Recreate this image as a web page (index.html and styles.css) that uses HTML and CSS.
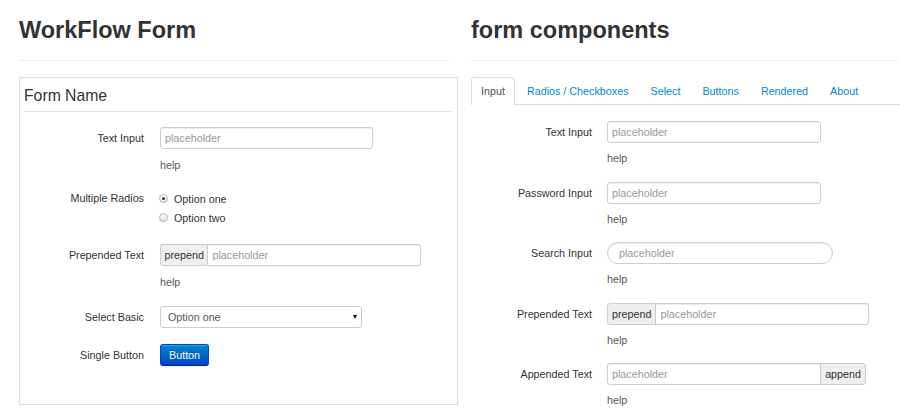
FILE: index.html
```html
<!DOCTYPE html>
<html>
<head>
<meta charset="utf-8">
<title>WorkFlow Form</title>
<link rel="stylesheet" href="styles.css">
</head>
<body>
<div class="page">
  <section class="col col-left">
    <h2 class="title">WorkFlow Form</h2>
    <hr class="rule">
    <div class="form-box">
      <div class="legend">Form Name</div>
      <div class="rows rows-left">
        <div class="row">
          <label class="lbl">Text Input</label>
          <div class="ctl">
            <input class="inp w-left-text" type="text" placeholder="placeholder">
            <div class="help">help</div>
          </div>
        </div>
        <div class="row row-radio">
          <label class="lbl lbl-radio">Multiple Radios</label>
          <div class="ctl">
            <div class="radio-line"><span class="radio-dot checked"></span>Option one</div>
            <div class="radio-line"><span class="radio-dot"></span>Option two</div>
          </div>
        </div>
        <div class="row">
          <label class="lbl">Prepended Text</label>
          <div class="ctl">
            <div class="group w-left-prepend">
              <span class="addon addon-pre">prepend</span>
              <input class="inp inp-after-addon" type="text" placeholder="placeholder">
            </div>
            <div class="help">help</div>
          </div>
        </div>
        <div class="row">
          <label class="lbl">Select Basic</label>
          <div class="ctl">
            <div class="select-wrap">
              <select class="sel">
                <option>Option one</option>
                <option>Option two</option>
              </select>
            </div>
          </div>
        </div>
        <div class="row">
          <label class="lbl">Single Button</label>
          <div class="ctl">
            <button class="btn">Button</button>
          </div>
        </div>
      </div>
    </div>
  </section>

  <section class="col col-right">
    <h2 class="title">form components</h2>
    <hr class="rule">
    <ul class="tabs">
      <li class="tab active">Input</li>
      <li class="tab">Radios / Checkboxes</li>
      <li class="tab">Select</li>
      <li class="tab">Buttons</li>
      <li class="tab">Rendered</li>
      <li class="tab">About</li>
    </ul>
    <div class="rows rows-right">
      <div class="row">
        <label class="lbl">Text Input</label>
        <div class="ctl">
          <input class="inp w-right-text" type="text" placeholder="placeholder">
          <div class="help">help</div>
        </div>
      </div>
      <div class="row">
        <label class="lbl">Password Input</label>
        <div class="ctl">
          <input class="inp w-right-text" type="password" placeholder="placeholder">
          <div class="help">help</div>
        </div>
      </div>
      <div class="row">
        <label class="lbl">Search Input</label>
        <div class="ctl">
          <input class="inp inp-search" type="text" placeholder="placeholder">
          <div class="help">help</div>
        </div>
      </div>
      <div class="row">
        <label class="lbl">Prepended Text</label>
        <div class="ctl">
          <div class="group w-right-prepend">
            <span class="addon addon-pre">prepend</span>
            <input class="inp inp-after-addon" type="text" placeholder="placeholder">
          </div>
          <div class="help">help</div>
        </div>
      </div>
      <div class="row">
        <label class="lbl">Appended Text</label>
        <div class="ctl">
          <div class="group w-right-append">
            <input class="inp inp-before-addon" type="text" placeholder="placeholder">
            <span class="addon addon-app">append</span>
          </div>
          <div class="help">help</div>
        </div>
      </div>
    </div>
  </section>
</div>
</body>
</html>
```
FILE: styles.css
```css
* { box-sizing: border-box; }
html, body { margin: 0; padding: 0; background: #fff; }
body {
  font-family: "Liberation Sans", Arial, sans-serif;
  font-size: 10.75px;
  color: #333;
  width: 900px;
  height: 417px;
  overflow: hidden;
}
.page { display: flex; gap: 13px; padding-left: 19px; }
.col { flex: none; }
.col-left { width: 439px; }
.col-right { width: 450px; }

.title {
  margin: 15px 0 0;
  font-size: 23.5px;
  line-height: 30px;
  font-weight: bold;
  color: #333;
}
.rule { margin: 15px 0 0; border: 0; border-top: 1px solid #eee; height: 0; }
.col-left .rule { width: 430px; }

.form-box {
  margin-top: 16px;
  border: 1px solid #ddd;
  padding: 0 4px 38px;
}
.legend {
  font-size: 15.75px;
  line-height: 26px;
  padding: 5px 0 2px;
  border-bottom: 1px solid #e5e5e5;
  color: #333;
}

.rows { display: flex; flex-direction: column; }
.rows-left { gap: 16px; margin-top: 15px; }
.rows-right { gap: 15.5px; margin-top: 16px; }
.row { display: flex; align-items: flex-start; }
.row-radio { margin-bottom: 1px; }
.lbl { text-align: right; line-height: 22px; color: #333; flex: none; }
.rows-left .lbl { width: 120px; margin-right: 16px; }
.rows-right .lbl { width: 121px; margin-right: 15px; }
.lbl-radio { line-height: 19px; }
.ctl { display: flex; flex-direction: column; align-items: flex-start; }

.inp {
  height: 22px;
  border: 1px solid #ccc;
  border-radius: 3px;
  padding: 0 4px;
  font: inherit;
  color: #555;
  background: #fff;
  box-shadow: inset 0 1px 1px rgba(0,0,0,.075);
  outline: none;
}
.inp::placeholder { color: #999; }
.w-left-text { width: 213px; }
.w-right-text { width: 214px; }
.inp-search { width: 226px; border-radius: 11px; padding-left: 11px; }

.help { color: #595959; line-height: 15px; }
.rows-left .help { margin-top: 9px; }
.rows-right .help { margin-top: 8px; }

.radio-line { display: flex; align-items: center; height: 19px; color: #333; }
.radio-dot {
  width: 9px; height: 9px;
  border-radius: 50%;
  border: 1px solid #b5b5b5;
  background: linear-gradient(#fdfdfd, #e2e2e2);
  margin: 0 6px 0 -1px;
  display: flex; align-items: center; justify-content: center;
}
.radio-dot.checked::after {
  content: "";
  width: 3px; height: 3px;
  border-radius: 50%;
  background: #3a3a3a;
}

.group { display: flex; height: 22px; }
.w-left-prepend { width: 261px; }
.w-right-prepend { width: 262px; }
.w-right-append { width: 259px; }
.addon {
  flex: none;
  height: 22px;
  line-height: 20px;
  padding: 0 4px;
  background: #eee;
  border: 1px solid #ccc;
  color: #333;
}
.col-left .addon-pre { padding: 0 3.5px; }
.addon-pre { border-radius: 3px 0 0 3px; }
.addon-app { border-radius: 0 3px 3px 0; margin-left: -1px; }
.group .inp { flex: 1; min-width: 0; }
.inp-after-addon { border-left: 0; border-radius: 0 3px 3px 0; }
.inp-before-addon { border-radius: 3px 0 0 3px; }

.select-wrap { position: relative; width: 202px; height: 22px; }
.sel {
  -webkit-appearance: none;
  appearance: none;
  width: 100%;
  height: 22px;
  border: 1px solid #ccc;
  border-radius: 3px;
  background: #fff;
  padding: 0 0 0 7px;
  font: inherit;
  color: #555;
  outline: none;
}
.select-wrap::after {
  content: "";
  position: absolute;
  right: 5px;
  top: 9px;
  border-left: 2.5px solid transparent;
  border-right: 2.5px solid transparent;
  border-top: 4px solid #111;
  pointer-events: none;
}

.btn {
  height: 22px;
  padding: 0 8px;
  border: 1px solid #0044cc;
  border-bottom-color: #002a80;
  border-radius: 3px;
  background: linear-gradient(#0088cc, #0044cc);
  color: #fff;
  font: inherit;
  line-height: 20px;
  text-shadow: 0 -1px 0 rgba(0,0,0,.25);
  box-shadow: inset 0 1px 0 rgba(255,255,255,.2), 0 1px 2px rgba(0,0,0,.05);
}

.tabs {
  list-style: none;
  margin: 16px 0 0;
  padding: 0;
  display: flex;
  border-bottom: 1px solid #ddd;
}
.tab {
  padding: 0 9px;
  line-height: 27px;
  border: 1px solid transparent;
  border-bottom: 0;
  border-radius: 4px 4px 0 0;
  margin: 0 2px -1px 0;
  color: #0088cc;
  background: transparent;
}
.tab.active {
  color: #555;
  border-color: #ddd;
  background: #fff;
}
```
